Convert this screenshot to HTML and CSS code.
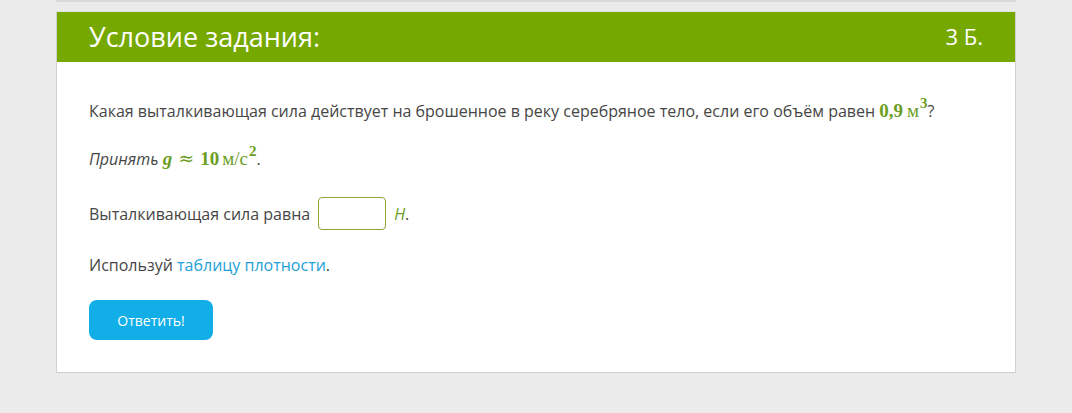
FILE: index.html
```html
<!DOCTYPE html>
<html lang="ru">
<head>
<meta charset="utf-8">
<title>Условие задания</title>
<link rel="stylesheet" href="styles.css">
</head>
<body>
<div class="page">
  <div class="prev-edge"></div>
  <section class="card">
    <header class="card-head">
      <h1 class="card-title">Условие задания:</h1>
      <span class="card-points">3 Б.</span>
    </header>
    <div class="card-body">
      <p class="line line-1">Какая выталкивающая сила действует на брошенное в реку серебряное тело, если его объём равен <span class="math"><b>0,9</b><span class="unit-sp">м</span><sup>3</sup></span>?</p>
      <p class="line line-2"><i>Принять</i> <span class="math"><b><i>g</i></b><span class="approx">≈</span><b>10</b><span class="unit-tight">м/с</span><sup>2</sup></span>.</p>
      <div class="answer-row">
        <span>Выталкивающая сила равна</span>
        <input class="answer-input" type="text">
        <span><i class="unit">Н</i>.</span>
      </div>
      <p class="line line-4">Используй <a class="link" href="#">таблицу плотности</a>.</p>
      <button class="btn" type="button">Ответить!</button>
    </div>
  </section>
</div>
</body>
</html>
```

FILE: styles.css
```css
html, body {
  margin: 0;
  padding: 0;
  background: #ebebeb;
}
body {
  font-family: "Open Sans", "Liberation Sans", sans-serif;
  color: #464646;
}
.page {
  width: 960px;
  margin-left: 56px;
}
.prev-edge {
  height: 2px;
  background: #d9d9d9;
  margin-bottom: 9px;
}
.card {
  background: #fff;
  border: 1px solid #cfcfcf;
  border-top-color: #e2e2e2;
}
.card-head {
  height: 50px;
  background: #75a800;
  color: #fff;
  display: flex;
  align-items: center;
  justify-content: space-between;
  padding: 0 32px;
}
.card-title {
  margin: 0;
  font-weight: 400;
  font-size: 27px;
  line-height: 1;
  position: relative;
  top: -1px;
}
.card-points {
  font-size: 22px;
  line-height: 1;
  position: relative;
  top: -1px;
}
.card-body {
  padding: 37px 32px 32px;
  display: flex;
  flex-direction: column;
  align-items: flex-start;
  font-size: 16px;
}
.line {
  margin: 0;
  line-height: 24px;
}
.line-2 {
  margin-top: 23px;
  height: 24px;
}
.answer-row {
  margin-top: 27px;
  display: flex;
  align-items: center;
  gap: 7px;
  line-height: 24px;
}
.answer-input {
  width: 68px;
  height: 33px;
  box-sizing: border-box;
  border: 1px solid #8aa832;
  border-radius: 4px;
  margin: 0 1px;
  padding: 0;
  background: #fff;
}
.unit {
  color: #6b9e23;
}
.line-4 {
  margin-top: 23px;
}
.math {
  font-family: "Liberation Serif", "DejaVu Serif", serif;
  color: #6b9e23;
  font-size: 19px;
}
.math b {
  font-weight: 700;
}
.unit-sp {
  margin-left: 4px;
}
.unit-tight {
  margin-left: 3px;
}
.math sup {
  font-size: 15px;
  font-weight: 700;
  line-height: 0;
  vertical-align: 9px;
  margin-left: 1px;
}
.approx {
  font-family: "DejaVu Serif", serif;
  color: #6b9e23;
  font-size: 19px;
  margin: 0 6px;
}
.link {
  color: #1ea0d7;
  text-decoration: none;
}
.btn {
  margin-top: 23px;
  width: 124px;
  height: 40px;
  border: 0;
  border-radius: 8px;
  background: #11aee8;
  color: #fff;
  font-family: "Open Sans", "Liberation Sans", sans-serif;
  font-size: 14px;
  padding: 0;
}
```
